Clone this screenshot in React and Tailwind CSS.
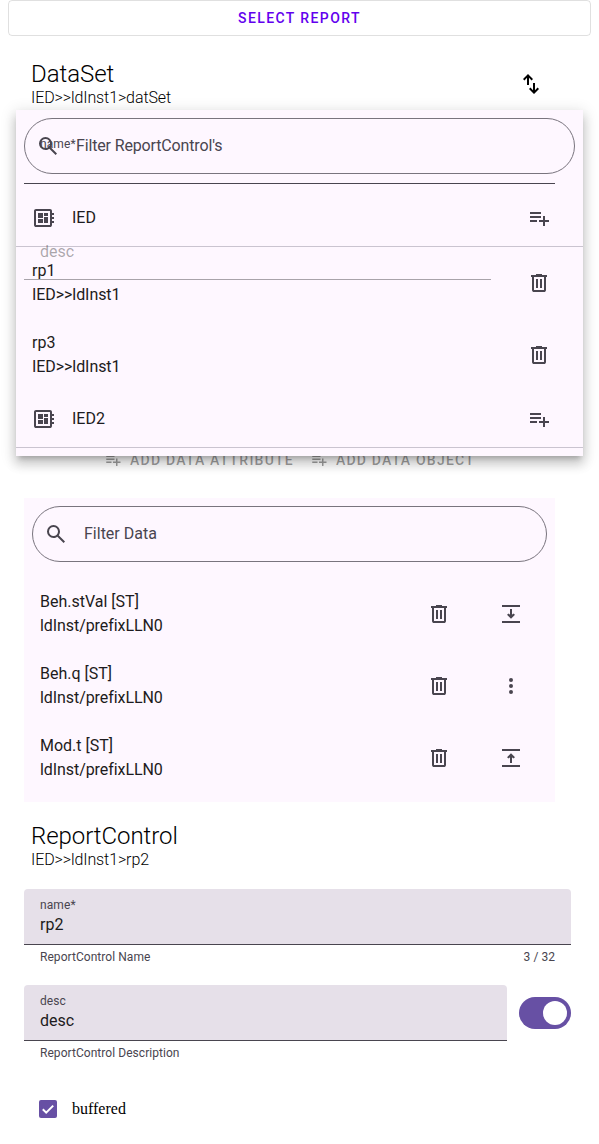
import React from 'react';

const PATHS = {
  swap: 'M8 13V5.825L5.425 8.4 4 7l5-5 5 5-1.425 1.4L10 5.825V13zm7 9-5-5 1.425-1.4L14 18.175V11h2v7.175l2.575-2.575L20 17z',
  search:
    'M19.6 21l-6.3-6.3q-.75.6-1.725.95T9.5 16q-2.725 0-4.612-1.888T3 9.5t1.888-4.612T9.5 3t4.613 1.888T16 9.5q0 1.1-.35 2.075T14.7 13.3l6.3 6.3zM9.5 14q1.875 0 3.188-1.312T14 9.5t-1.312-3.187T9.5 5 6.313 6.313 5 9.5t1.313 3.188T9.5 14',
  board:
    'M4 21q-.825 0-1.412-.587T2 19V5q0-.825.588-1.412T4 3h14q.825 0 1.413.588T20 5v2h2v2h-2v2h2v2h-2v2h2v2h-2v2q0 .825-.587 1.413T18 21zm0-2h14V5H4zm2-2h5v-4H6zm6-7h4V7h-4zm-6 2h5V7H6zm6 5h4v-6h-4z',
  add: 'M3 16v-2h7v2zm0-4v-2h11v2zm0-4V6h11v2zm13 12v-4h-4v-2h4v-4h2v4h4v2h-4v4z',
  trash:
    'M7 21q-.825 0-1.412-.587T5 19V6H4V4h5V3h6v1h5v2h-1v13q0 .825-.587 1.413T17 21zM17 6H7v13h10zM9 17h2V8H9zm4 0h2V8h-2z',
  down: 'M3 3h18v2H3zM3 19h18v2H3zM11 7h2v5.7l1.3-1.3 1.7 1.4-4 4-4-4 1.7-1.4 1.3 1.3z',
  up: 'M3 3h18v2H3zM3 19h18v2H3zM11 17h2v-5.7l1.3 1.3 1.7-1.4-4-4-4 4 1.7 1.4 1.3-1.3z',
  more: 'M12 4a2 2 0 1 1 0 4 2 2 0 0 1 0-4zM12 10a2 2 0 1 1 0 4 2 2 0 0 1 0-4zM12 16a2 2 0 1 1 0 4 2 2 0 0 1 0-4z',
};

function Icon({ name, className = 'size-6' }) {
  return (
    <svg viewBox="0 0 24 24" fill="currentColor" fillRule="evenodd" className={`shrink-0 ${className}`}>
      <path d={PATHS[name]} />
    </svg>
  );
}

function Heading({ title, path }) {
  return (
    <div className="pl-[7px] font-light text-black">
      <h2 className="text-2xl leading-7 tracking-[-0.05px]">{title}</h2>
      <h3 className="text-base leading-[19px] tracking-[-0.1px]">{path}</h3>
    </div>
  );
}

function TwoLines({ title, sub }) {
  return (
    <div className="flex-1 text-base leading-6 text-[#1d1b20]">
      <div>{title}</div>
      <div className="tracking-[-0.07px]">{sub}</div>
    </div>
  );
}

function NodeRow({ name }) {
  return (
    <div className="flex h-14 items-center gap-4 px-4 pr-8">
      <Icon name="board" />
      <span className="flex-1 text-base leading-6 text-[#1d1b20]">{name}</span>
      <Icon name="add" />
    </div>
  );
}

function ReportRow({ name }) {
  return (
    <div className="flex h-18 items-center pr-8 pl-4">
      <TwoLines title={name} sub="IED>>ldInst1" />
      <Icon name="trash" />
    </div>
  );
}

function ReportMenu() {
  return (
    <div className="absolute top-[110px] right-4 left-4 z-10 h-[346px] overflow-hidden bg-[#fef7ff] text-[#49454f] shadow-[0_8px_10px_1px_rgba(0,0,0,0.14),0_3px_14px_2px_rgba(0,0,0,0.12),0_5px_5px_-3px_rgba(0,0,0,0.2)]">
      <div className="p-2">
        <div className="flex h-14 items-center gap-4 rounded-full border border-[#79747e] px-[11px] text-base">
          <Icon name="search" />
          <span className="tracking-[-0.15px]">Filter ReportControl's</span>
        </div>
      </div>
      <div className="pt-2">
        <NodeRow name="IED" />
        <div className="h-px bg-[#cac4d0]" />
        <ReportRow name="rp1" />
        <ReportRow name="rp3" />
        <NodeRow name="IED2" />
        <div className="h-px bg-[#cac4d0]" />
      </div>
    </div>
  );
}

function DisabledButton({ label }) {
  return (
    <button className="flex h-9 items-center gap-2 px-2 text-sm font-medium tracking-[1.22px] text-black/38 uppercase">
      <Icon name="add" className="size-[18px]" />
      {label}
    </button>
  );
}

function DataRow({ title, action }) {
  return (
    <div className="flex h-18 items-center pr-8 pl-4 text-[#49454f]">
      <TwoLines title={title} sub="ldInst/prefixLLN0" />
      <Icon name="trash" />
      <Icon name={action} className="ml-12 size-6" />
    </div>
  );
}

function FilledField({ label, value, help, counter }) {
  return (
    <div className="flex-1">
      <div className="flex h-14 flex-col rounded-t border-b border-[#49454f] bg-[#e6e0e9] px-4 pt-2">
        <span className="text-xs leading-4 tracking-[0.1px] text-[#49454f]">{label}</span>
        <span className="text-base leading-6 text-[#1d1b20]">{value}</span>
      </div>
      <div className="flex justify-between px-4 pt-1 text-xs leading-4 tracking-[0.05px] text-[#49454f]">
        <span>{help}</span>
        <span>{counter}</span>
      </div>
    </div>
  );
}

export default function App() {
  return (
    <div className="relative h-[1144px] w-full overflow-hidden bg-white font-[Roboto,sans-serif]">
      <div className="px-2">
        <button className="h-9 w-full rounded border border-black/12 text-sm font-medium tracking-[1.4px] text-[#6200ee] uppercase">
          Select Report
        </button>
      </div>

      <ReportMenu />

      <section className="pt-6 pr-11 pl-6">
        <div className="flex items-center justify-between pr-3">
          <Heading title="DataSet" path="IED>>ldInst1>datSet" />
          <Icon name="swap" />
        </div>
        <div className="relative z-20 mt-[21px] h-14 border-b border-[#49454f] px-4 pt-2 text-xs leading-4 tracking-[0.1px] text-[#49454f]">
          name*
        </div>
        <div className="relative z-20 mt-10 mr-16 flex h-14 items-center border-b border-[#1d1b20]/38 px-4 text-base text-[#1d1b20]/38">
          desc
        </div>
        <div className="mt-[162px] flex justify-center">
          <DisabledButton label="Add Data Attribute" />
          <DisabledButton label="Add Data Object" />
        </div>
        <div className="mt-5 bg-[#fef7ff] py-2">
          <div className="mx-2 mb-4 flex h-14 items-center gap-4 rounded-full border border-[#79747e] px-[11px] text-base text-[#49454f]">
            <Icon name="search" />
            <span>Filter Data</span>
          </div>
          <DataRow title="Beh.stVal [ST]" action="down" />
          <DataRow title="Beh.q [ST]" action="more" />
          <DataRow title="Mod.t [ST]" action="up" />
        </div>
      </section>

      <section className="pt-5 pr-7 pl-6">
        <Heading title="ReportControl" path="IED>>ldInst1>rp2" />
        <div className="mt-5 flex">
          <FilledField label="name*" value="rp2" help="ReportControl Name" counter="3 / 32" />
        </div>
        <div className="mt-5 flex gap-3">
          <FilledField label="desc" value="desc" help="ReportControl Description" />
          <div className="mt-3 flex h-8 w-[52px] items-center justify-end rounded-full bg-[#6750a4] px-1">
            <div className="size-6 rounded-full bg-white" />
          </div>
        </div>
        <div className="mt-[39px] flex items-center gap-[15px] pl-[15px]">
          <div className="flex size-[18px] items-center justify-center rounded-xs bg-[#6750a4]">
            <svg viewBox="0 0 18 18" className="size-[18px]" fill="none" stroke="white" strokeWidth="2">
              <path d="M3.8 9.2l3.4 3.4 7-7" />
            </svg>
          </div>
          <span className="font-['Liberation_Serif',serif] text-base leading-[18px] text-black">buffered</span>
        </div>
      </section>
    </div>
  );
}
